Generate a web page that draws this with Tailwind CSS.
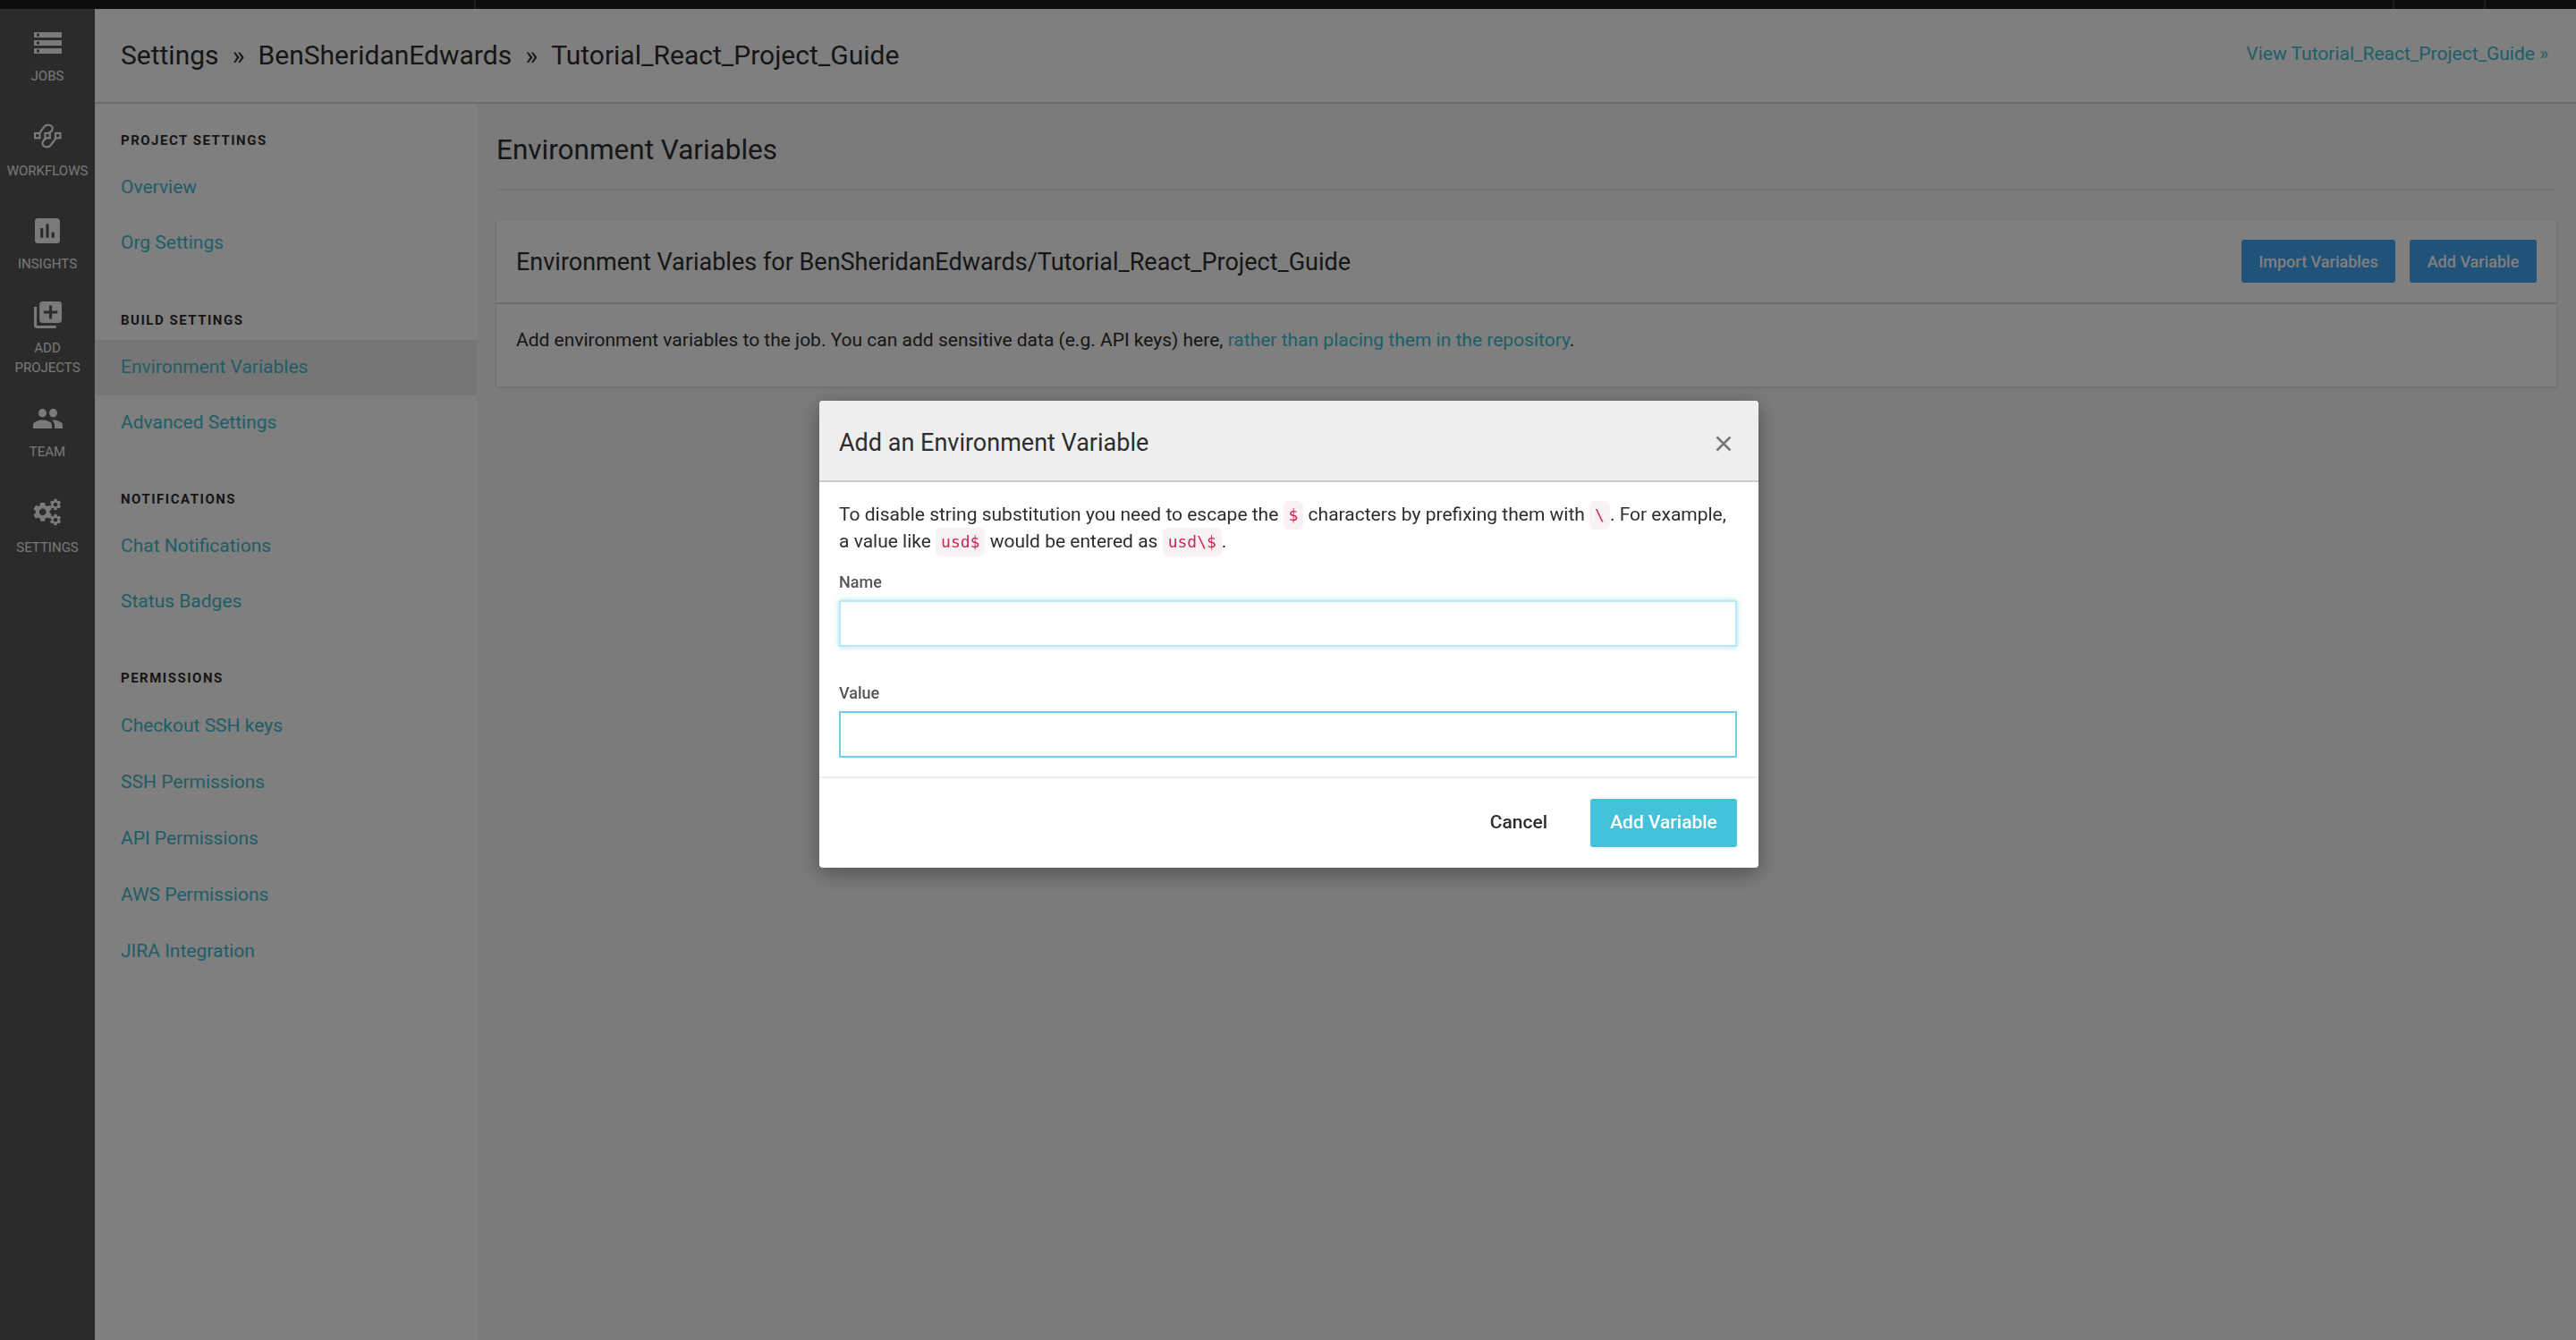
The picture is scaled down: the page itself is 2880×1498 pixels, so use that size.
<!DOCTYPE html>
<html lang="en">
<head>
    <meta charset="UTF-8">
    <title>Environment Variables</title>
    <script src="https://cdn.jsdelivr.net/npm/@tailwindcss/browser@4"></script>
</head>
<body class="font-['Roboto',sans-serif] bg-[#f6f6f6] h-screen overflow-hidden">
    <svg class="hidden">
        <symbol id="gear" viewBox="0 0 24 24"><path d="M19.14 12.94c.04-.3.06-.61.06-.94 0-.32-.02-.64-.07-.94l2.03-1.58c.18-.14.23-.41.12-.61l-1.92-3.32c-.12-.22-.37-.29-.59-.22l-2.39.96c-.5-.38-1.03-.7-1.62-.94l-.36-2.54c-.04-.24-.24-.41-.48-.41h-3.84c-.24 0-.43.17-.47.41l-.36 2.54c-.59.24-1.13.57-1.62.94l-2.39-.96c-.22-.08-.47 0-.59.22L2.74 8.87c-.12.21-.08.47.12.61l2.03 1.58c-.05.3-.09.63-.09.94s.02.64.07.94l-2.03 1.58c-.18.14-.23.41-.12.61l1.92 3.32c.12.22.37.29.59.22l2.39-.96c.5.38 1.03.7 1.62.94l.36 2.54c.05.24.24.41.48.41h3.84c.24 0 .44-.17.47-.41l.36-2.54c.59-.24 1.13-.56 1.62-.94l2.39.96c.22.08.47 0 .59-.22l1.92-3.32c.12-.22.07-.47-.12-.61l-2.01-1.58zM12 15.6c-1.98 0-3.6-1.62-3.6-3.6s1.62-3.6 3.6-3.6 3.6 1.62 3.6 3.6-1.62 3.6-3.6 3.6z"/></symbol>
    </svg>

    <!-- top strip -->
    <div class="h-[10px] bg-[#1a1a1a] flex">
        <div class="ml-[530px] w-[2px] bg-[#3a3a3a]"></div>
        <div class="ml-[2143px] w-[2px] bg-[#3a3a3a]"></div>
        <div class="ml-[100px] w-[2px] bg-[#3a3a3a]"></div>
    </div>

    <div class="flex h-[1488px]">
        <!-- icon rail -->
        <nav class="w-[106px] shrink-0 bg-[#565656] text-[#eeeeee] text-[15px] leading-[22px] text-center flex flex-col items-center">
            <svg class="mt-[26px] w-[31px] h-[24px]" viewBox="0 0 31 24" fill="#f5f5f5" fill-rule="evenodd">
                <path d="M0 0h31v6H0zM3 1.500v3h3v-3z"/><path d="M0 9h31v6H0zM3 10.500v3h3v-3z"/><path d="M0 18h31v6H0zM3 19.500v3h3v-3z"/>
            </svg>
            <span class="mt-[14px]">JOBS</span>

            <svg class="mt-[42px] w-[31px] h-[28px]" viewBox="0 0 31 28" fill="none" stroke="#f5f5f5" stroke-width="2.200">
                <rect x="1.100" y="10.900" width="5.400" height="5.400"/><rect x="12.400" y="10.900" width="5.400" height="5.400"/><rect x="24" y="10.900" width="5.400" height="5.400"/>
                <path d="M6.500 10.500L11 4.200C13.500 .5 20.500 1 20.700 5.500C20.800 8.500 18 10 16 11"/>
                <path d="M13.500 16.500C11.500 18 9.300 20 9.500 22.500C9.800 27 16.500 27.500 19 24L24.500 16.500"/>
            </svg>
            <span class="mt-[14px]">WORKFLOWS</span>

            <svg class="mt-[42px] w-[28px] h-[28px]" viewBox="3 3 18 18" fill="#f5f5f5">
                <path d="M19 3H5c-1.100 0-2 .9-2 2v14c0 1.100.9 2 2 2h14c1.100 0 2-.9 2-2V5c0-1.100-.9-2-2-2zM9 17H7v-7h2v7zm4 0h-2V7h2v10zm4 0h-2v-4h2v4z"/>
            </svg>
            <span class="mt-[12px]">INSIGHTS</span>

            <svg class="mt-[31px] w-[31px] h-[30px]" viewBox="2 2 20 20" fill="#f5f5f5" preserveAspectRatio="none">
                <path d="M4 6H2v14c0 1.100.9 2 2 2h14v-2H4V6zm16-4H8c-1.100 0-2 .9-2 2v12c0 1.100.9 2 2 2h12c1.100 0 2-.9 2-2V4c0-1.100-.9-2-2-2zm-1 9h-4v4h-2v-4H9V9h4V5h2v4h4v2z"/>
            </svg>
            <span class="mt-[11px] w-[80px]">ADD PROJECTS</span>

            <svg class="mt-[35px] w-[33px] h-[22px]" viewBox="1 5 22 14" fill="#f5f5f5" preserveAspectRatio="none">
                <path d="M16 11c1.660 0 2.990-1.340 2.990-3S17.660 5 16 5c-1.660 0-3 1.340-3 3s1.340 3 3 3zm-8 0c1.660 0 2.990-1.340 2.990-3S9.660 5 8 5C6.340 5 5 6.340 5 8s1.340 3 3 3zm0 2c-2.330 0-7 1.170-7 3.500V19h14v-2.500c0-2.330-4.670-3.500-7-3.500zm8 0c-.29 0-.62.02-.97.05 1.160.84 1.970 1.970 1.970 3.450V19h6v-2.500c0-2.330-4.670-3.500-7-3.500z"/>
            </svg>
            <span class="mt-[15px]">TEAM</span>

            <svg class="mt-[42px] w-[31px] h-[28px] overflow-visible" viewBox="0 0 31 28" fill="#f5f5f5">
                <use href="#gear" x="-3.300" y="1.300" width="26" height="26"/>
                <use href="#gear" x="16.250" y="-1.750" width="15.500" height="15.500"/>
                <use href="#gear" x="16.250" y="15.250" width="15.500" height="15.500"/>
            </svg>
            <span class="mt-[15px]">SETTINGS</span>
        </nav>

        <div class="flex-1 flex flex-col min-w-0">
            <!-- breadcrumb header -->
            <header class="h-[106px] shrink-0 bg-[#fefefe] border-b-2 border-[#d8d8d8] pl-[29px] pr-[31px] pb-[2px] flex items-center justify-between">
                <h1 class="flex items-center text-[30px] text-[#2d2d2d] gap-[15px]">
                    <span>Settings</span><span>»</span><span>BenSheridanEdwards</span><span>»</span><span>Tutorial_React_Project_Guide</span>
                </h1>
                <a href="#" class="text-[21px] text-[#3fbccf]">View Tutorial_React_Project_Guide »</a>
            </header>

            <div class="flex flex-1 min-h-0">
                <!-- settings menu -->
                <aside class="w-[427px] shrink-0 bg-[#fefefe] pt-[27px] text-[21px] text-[#3fbccf]">
                    <h3 class="pl-[29px] h-[28px] leading-[28px] text-[15px] font-bold tracking-[1.500px] text-[#2d2d2d]">PROJECT SETTINGS</h3>
                    <a href="#" class="pl-[29px] h-[62px] mt-[8px] flex items-center">Overview</a>
                    <a href="#" class="pl-[29px] h-[62px] flex items-center">Org Settings</a>

                    <h3 class="pl-[29px] h-[28px] leading-[28px] mt-[41px] text-[15px] font-bold tracking-[1.500px] text-[#2d2d2d]">BUILD SETTINGS</h3>
                    <a href="#" class="pl-[29px] h-[62px] mt-[8px] flex items-center bg-[#ececec]">Environment Variables</a>
                    <a href="#" class="pl-[29px] h-[62px] flex items-center">Advanced Settings</a>

                    <h3 class="pl-[29px] h-[28px] leading-[28px] mt-[40px] text-[15px] font-bold tracking-[1.500px] text-[#2d2d2d]">NOTIFICATIONS</h3>
                    <a href="#" class="pl-[29px] h-[62px] mt-[8px] flex items-center">Chat Notifications</a>
                    <a href="#" class="pl-[29px] h-[62px] flex items-center">Status Badges</a>

                    <h3 class="pl-[29px] h-[28px] leading-[28px] mt-[40px] text-[15px] font-bold tracking-[1.500px] text-[#2d2d2d]">PERMISSIONS</h3>
                    <a href="#" class="pl-[29px] h-[63px] mt-[8px] flex items-center">Checkout SSH keys</a>
                    <a href="#" class="pl-[29px] h-[63px] flex items-center">SSH Permissions</a>
                    <a href="#" class="pl-[29px] h-[63px] flex items-center">API Permissions</a>
                    <a href="#" class="pl-[29px] h-[63px] flex items-center">AWS Permissions</a>
                    <a href="#" class="pl-[29px] h-[63px] flex items-center">JIRA Integration</a>
                </aside>

                <!-- page content -->
                <main class="flex-1 min-w-0 pl-[22px] pr-[22px]">
                    <h2 class="h-[97px] pt-[28px] border-b-2 border-[#ebebeb] text-[31.500px] leading-[48px] text-[#2d2d2d]">Environment Variables</h2>
                    <section class="mt-[33px] bg-white shadow-[0_1px_3px_rgba(0,0,0,0.15)]">
                        <div class="h-[94px] px-[22px] flex items-center justify-between border-b-2 border-[#d8d8d8]">
                            <h3 class="pt-[2px] text-[27px] text-[#2d2d2d]">Environment Variables for BenSheridanEdwards/Tutorial_React_Project_Guide</h3>
                            <div class="flex gap-[16px]">
                                <button class="h-[48px] w-[172px] rounded-[3px] bg-[#42a4f2] text-white text-[18px] font-medium">Import Variables</button>
                                <button class="h-[48px] w-[142px] rounded-[3px] bg-[#42a4f2] text-white text-[18px] font-medium">Add Variable</button>
                            </div>
                        </div>
                        <p class="h-[92px] px-[22px] pt-[25px] text-[21px] leading-[30px] text-[#2d2d2d]">Add environment variables to the job. You can add sensitive data (e.g. API keys) here, <a href="#" class="text-[#3fbccf]">rather than placing them in the repository</a>.</p>
                    </section>
                </main>
            </div>
        </div>
    </div>

    <!-- dialog -->
    <div class="fixed inset-0 bg-black/50 flex justify-center items-start pt-[448px] pl-[2px]">
        <div class="w-[1050px] h-[522px] rounded-[4px] bg-white shadow-[0_6px_24px_rgba(0,0,0,0.35)] flex flex-col">
            <div class="h-[91px] shrink-0 rounded-t-[4px] bg-[#eeeeee] border-b-2 border-[#cccccc] pl-[22px] pr-[30px] pt-[6px] flex items-center justify-between">
                <h4 class="text-[27px] text-[#2d2d2d]">Add an Environment Variable</h4>
                <svg class="w-[18px] h-[18px]" viewBox="0 0 18 18" fill="none" stroke="#757575" stroke-width="2.500"><path d="M1.500 1.500l15 15M16.500 1.500l-15 15"/></svg>
            </div>
            <div class="pl-[22px] pr-[24px] pt-[21px] flex-1">
                <p class="text-[21px] leading-[30px] text-[#2d2d2d]">To disable string substitution you need to escape the <code class="inline-block -my-[2px] px-[6px] leading-[32px] font-['DejaVu_Sans_Mono',monospace] text-[18px] text-[#d0264f] bg-[#f9f2f4] rounded-[6px]">$</code> characters by prefixing them with <code class="inline-block -my-[2px] px-[6px] leading-[32px] font-['DejaVu_Sans_Mono',monospace] text-[18px] text-[#d0264f] bg-[#f9f2f4] rounded-[6px]">\</code>. For example, a value like <code class="inline-block -my-[2px] px-[6px] leading-[32px] font-['DejaVu_Sans_Mono',monospace] text-[18px] text-[#d0264f] bg-[#f9f2f4] rounded-[6px]">usd$</code> would be entered as <code class="inline-block -my-[2px] px-[6px] leading-[32px] font-['DejaVu_Sans_Mono',monospace] text-[18px] text-[#d0264f] bg-[#f9f2f4] rounded-[6px]">usd\$</code>.</p>
                <label class="block mt-[19px] text-[18px] leading-[24px] font-medium text-[#555]">Name</label>
                <input class="block mt-[8px] w-full h-[52px] border-2 border-[#b9e9f2] shadow-[0_0_6px_rgba(68,194,218,0.5)] outline-none">
                <label class="block mt-[40px] text-[18px] leading-[24px] font-medium text-[#555]">Value</label>
                <input class="block mt-[8px] w-full h-[52px] border-2 border-[#6fd0e3] outline-none">
            </div>
            <div class="h-[102px] shrink-0 border-t-2 border-[#eeeeee] px-[24px] flex items-center justify-end gap-[48px]">
                <button class="text-[21px] font-medium text-[#2d2d2d]">Cancel</button>
                <button class="h-[54px] w-[164px] rounded-[3px] bg-[#44c2da] text-white text-[21px] font-medium">Add Variable</button>
            </div>
        </div>
    </div>
</body>
</html>
